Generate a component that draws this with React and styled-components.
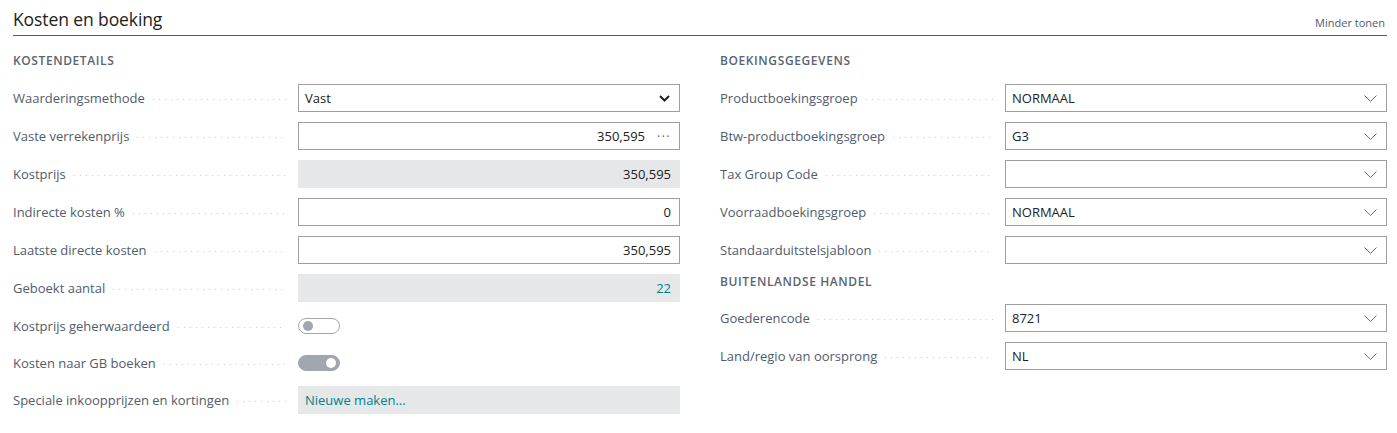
import React from "react";
import styled, { createGlobalStyle } from "styled-components";

const Global = createGlobalStyle`
  html, body { margin: 0; padding: 0; background: #fff; }
  body { font-family: "Segoe UI", "Open Sans", "Noto Sans", sans-serif; color: #212121; }
`;

const Page = styled.div`
  padding: 0 10px 0 13px;
  width: 1397px;
  box-sizing: border-box;
`;

const Header = styled.div`
  height: 35px;
  display: flex;
  align-items: center;
  justify-content: space-between;
  border-bottom: 1px solid #505c6d;
  padding-right: 2px;
`;

const Title = styled.h1`
  margin: 0;
  font-size: 17.5px;
  font-weight: 400;
  color: #212121;
  line-height: 20px;
  padding-top: 2px;
  letter-spacing: -0.1px;
`;

const ShowLess = styled.span`
  font-size: 11px;
  color: #505c6d;
  padding-top: 10px;
`;

const Columns = styled.div`
  display: grid;
  grid-template-columns: 1fr 1fr;
  column-gap: 40px;
`;

const Column = styled.div`
  display: flex;
  flex-direction: column;
`;

const SectionTitle = styled.div`
  font-size: 12px;
  font-weight: 600;
  color: #5a6472;
  line-height: 16px;
  letter-spacing: 0.6px;
  padding-top: ${(p) => (p.$first ? "17px" : "0")};
  margin-bottom: ${(p) => (p.$first ? "15px" : "14px")};
`;

const Row = styled.div`
  display: grid;
  grid-template-columns: 285px 1fr;
  align-items: center;
  height: ${(p) => (p.$short ? "27px" : "28px")};
  margin-bottom: 10px;
`;

const Label = styled.div`
  display: flex;
  align-items: center;
  font-size: 13px;
  color: #505c6d;
  white-space: nowrap;
  min-width: 0;
`;

const Leader = styled.span`
  flex: 1;
  height: 1px;
  margin: 3px 12px 0 8px;
  background-image: repeating-linear-gradient(
    to right,
    #c8ccd1 0 1px,
    transparent 1px 6px
  );
`;

const Field = styled.div`
  height: 28px;
  box-sizing: border-box;
  display: flex;
  align-items: center;
  justify-content: ${(p) => (p.$right ? "flex-end" : "space-between")};
  gap: 10px;
  padding: 0 8px 0 6px;
  font-size: 13px;
  color: ${(p) => (p.$link ? "#00838a" : "#212121")};
  background: ${(p) => (p.$readonly ? "#e6e7e8" : "#fff")};
  border: 1px solid ${(p) => (p.$readonly ? "#e6e7e8" : "#a19f9d")};
`;

const Ellipsis = styled.span`
  color: #505c6d;
  font-size: 12px;
  letter-spacing: 1.5px;
  margin-left: 2px;
`;

const Toggle = styled.div`
  position: relative;
  width: 42px;
  height: 16px;
  box-sizing: border-box;
  border-radius: 8px;
  border: 1px solid #a2a6ae;
  background: ${(p) => (p.$on ? "#a2a6ae" : "#fff")};
  &::after {
    content: "";
    position: absolute;
    top: 2px;
    left: ${(p) => (p.$on ? "27px" : "4px")};
    width: 10px;
    height: 10px;
    border-radius: 50%;
    background: ${(p) => (p.$on ? "#fff" : "#a2a6ae")};
  }
`;

const Chevron = ({ bold }) =>
  bold ? (
    <svg width="11" height="7" viewBox="0 0 11 7" style={{ marginRight: 1 }}>
      <polyline points="1,1 5.5,5.5 10,1" fill="none" stroke="#212121" strokeWidth="2" />
    </svg>
  ) : (
    <svg width="13" height="7" viewBox="0 0 13 7" style={{ marginRight: 1 }}>
      <polyline points="0.5,0.5 6.5,6.5 12.5,0.5" fill="none" stroke="#707070" strokeWidth="1" />
    </svg>
  );

const FieldRow = ({ label, children, short }) => (
  <Row $short={short}>
    <Label>
      {label}
      <Leader />
    </Label>
    {children}
  </Row>
);

const Dropdown = ({ value }) => (
  <Field>
    <span>{value}</span>
    <Chevron />
  </Field>
);

export default function App() {
  return (
    <>
      <Global />
      <Page>
        <Header>
          <Title>Kosten en boeking</Title>
          <ShowLess>Minder tonen</ShowLess>
        </Header>
        <Columns>
          <Column>
            <SectionTitle $first>KOSTENDETAILS</SectionTitle>
            <FieldRow label="Waarderingsmethode">
              <Field>
                <span>Vast</span>
                <Chevron bold />
              </Field>
            </FieldRow>
            <FieldRow label="Vaste verrekenprijs">
              <Field $right>
                <span>350,595</span>
                <Ellipsis>···</Ellipsis>
              </Field>
            </FieldRow>
            <FieldRow label="Kostprijs">
              <Field $right $readonly>350,595</Field>
            </FieldRow>
            <FieldRow label="Indirecte kosten %">
              <Field $right>0</Field>
            </FieldRow>
            <FieldRow label="Laatste directe kosten">
              <Field $right>350,595</Field>
            </FieldRow>
            <FieldRow label="Geboekt aantal">
              <Field $right $readonly $link>22</Field>
            </FieldRow>
            <FieldRow label="Kostprijs geherwaardeerd" short>
              <Toggle />
            </FieldRow>
            <FieldRow label="Kosten naar GB boeken" short>
              <Toggle $on />
            </FieldRow>
            <FieldRow label="Speciale inkoopprijzen en kortingen">
              <Field $readonly $link>Nieuwe maken...</Field>
            </FieldRow>
          </Column>
          <Column>
            <SectionTitle $first>BOEKINGSGEGEVENS</SectionTitle>
            <FieldRow label="Productboekingsgroep">
              <Dropdown value="NORMAAL" />
            </FieldRow>
            <FieldRow label="Btw-productboekingsgroep">
              <Dropdown value="G3" />
            </FieldRow>
            <FieldRow label="Tax Group Code">
              <Dropdown value="" />
            </FieldRow>
            <FieldRow label="Voorraadboekingsgroep">
              <Dropdown value="NORMAAL" />
            </FieldRow>
            <FieldRow label="Standaarduitstelsjabloon">
              <Dropdown value="" />
            </FieldRow>
            <SectionTitle>BUITENLANDSE HANDEL</SectionTitle>
            <FieldRow label="Goederencode">
              <Dropdown value="8721" />
            </FieldRow>
            <FieldRow label="Land/regio van oorsprong">
              <Dropdown value="NL" />
            </FieldRow>
          </Column>
        </Columns>
      </Page>
    </>
  );
}
